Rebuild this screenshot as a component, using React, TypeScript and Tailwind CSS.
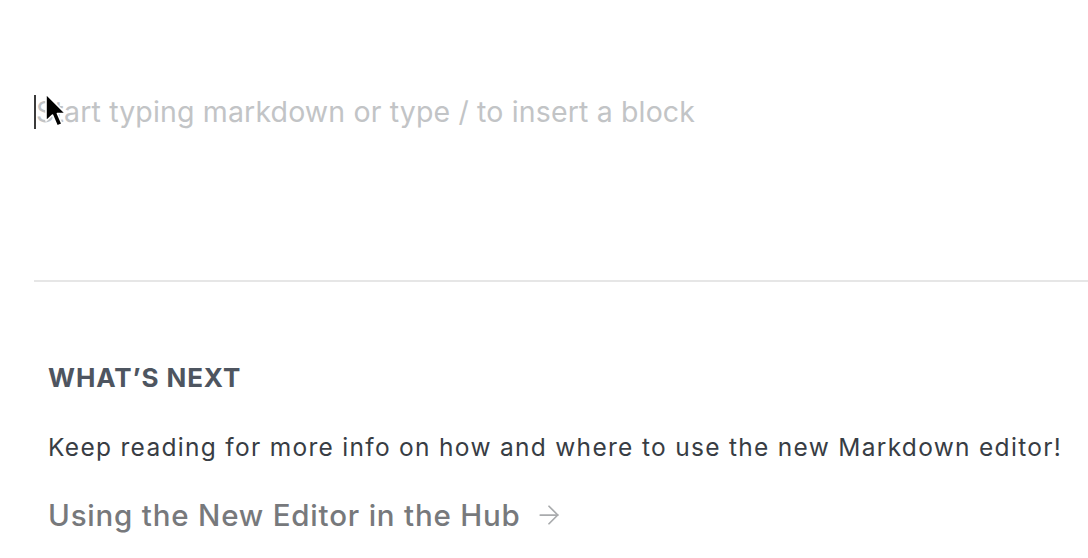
import React from 'react';
import { ArrowRight } from 'lucide-react';

function Pointer() {
  return (
    <svg
      className="absolute left-[44px] top-[92px]"
      width="24"
      height="38"
      viewBox="0 0 24 38"
    >
      <path
        d="M2 2 L2 29 L8.5 23 L13.2 34 L18 32 L13.4 21.5 L21.5 21.5 Z"
        fill="#000"
        stroke="#fff"
        strokeWidth="1.6"
        strokeLinejoin="round"
      />
    </svg>
  );
}

export default function App() {
  return (
    <div className="relative w-[1088px] h-[558px] overflow-hidden bg-white font-['Inter',sans-serif]">
      {/* Editor */}
      <div className="pl-[34px] pt-[94px] h-[280px]">
        <div className="flex items-center h-[36px]">
          <span className="w-[2px] h-[34px] bg-[#3a3a3a]" />
          <span className="text-[28.5px] text-[#c2c4c6] tracking-[0.15px] leading-none">
            Start typing markdown or type / to insert a block
          </span>
        </div>
      </div>
      <Pointer />

      <div className="ml-[34px] border-t-2 border-[#e6e6e6]" />

      {/* What's next */}
      <div className="pl-[48px] pt-[81px]">
        <h3 className="text-[26px] font-bold text-[#4e5560] uppercase leading-[30px] tracking-[0.9px]">
          What’s Next
        </h3>
        <p className="mt-[39px] text-[24.5px] text-[#383d44] leading-[30px] tracking-[1.3px]">
          Keep reading for more info on how and where to use the new Markdown editor!
        </p>
        <a className="mt-[36px] flex items-center gap-[13px] text-[29.5px] font-medium text-[#77797c] leading-[34px] tracking-[0.8px]">
          Using the New Editor in the Hub
          <ArrowRight size={30} strokeWidth={1.4} className="text-[#a9abad]" />
        </a>
      </div>
    </div>
  );
}
